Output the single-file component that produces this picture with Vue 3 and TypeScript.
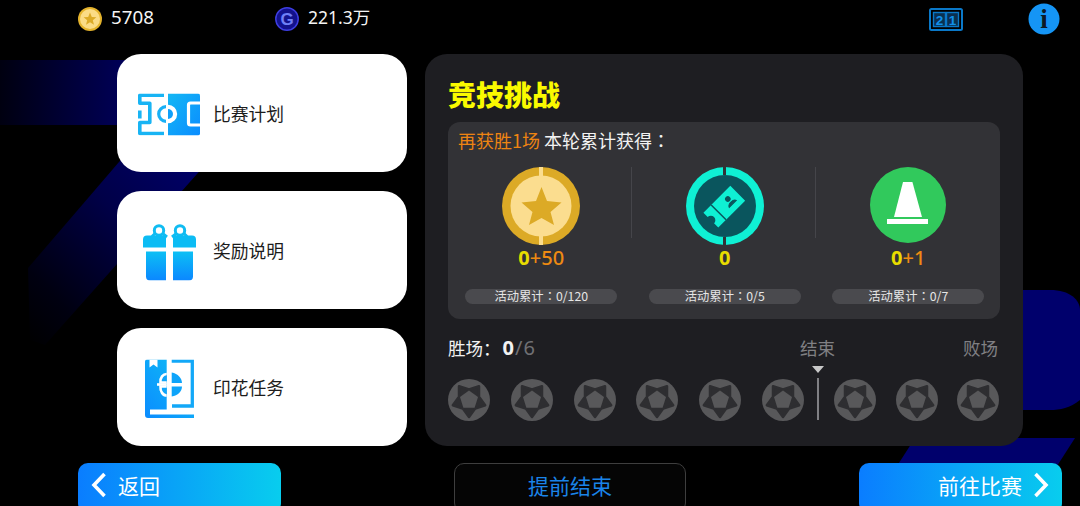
<script setup lang="ts">
const cards = [
  { key: 'plan', label: '比赛计划' },
  { key: 'gift', label: '奖励说明' },
  { key: 'book', label: '印花任务' },
]
const rewards = [
  { key: 'coin', base: '0', extra: '+50', note: '活动累计：0/120' },
  { key: 'ticket', base: '0', extra: '', note: '活动累计：0/5' },
  { key: 'cone', base: '0', extra: '+1', note: '活动累计：0/7' },
]
const winBalls = 6
const lossBalls = 3
</script>

<template>
  <div class="page">
    <svg class="backdrop" width="1080" height="506" viewBox="0 0 1080 506">
      <defs>
        <linearGradient id="bandFade" x1="0" x2="1" y1="0" y2="0">
          <stop offset="0" stop-color="#000010" />
          <stop offset="1" stop-color="#000058" />
        </linearGradient>
        <linearGradient id="diagFade" x1="1" x2="0" y1="0" y2="1">
          <stop offset="0" stop-color="#00006c" />
          <stop offset="0.4" stop-color="#000048" />
          <stop offset="0.8" stop-color="#000010" />
          <stop offset="1" stop-color="#000000" />
        </linearGradient>
      </defs>
      <rect x="0" y="60" width="125" height="65" fill="url(#bandFade)" />
      <path d="M125 155 L205 165 L45 345 L30 340 L28 268 Z" fill="url(#diagFade)" />
      <path d="M1000 290 H1050 C1070 290 1080 300 1080 310 V400 C1070 408 1060 410 1050 410 H1000 Z" fill="#00006c" />
      <path d="M915 438 H1075 L1057 466 H897 Z" fill="#00006c" />
    </svg>

    <header class="topbar">
      <div class="stat stat-coin">
        <svg width="24" height="24" viewBox="0 0 24 24">
          <circle cx="12" cy="12" r="12" fill="#e4b32c" />
          <circle cx="12" cy="12" r="10" fill="#fbdc85" />
          <path d="M12 5.6l1.8 4.4 4.6.3-3.6 2.9 1.2 4.6-4-2.5-4 2.5 1.2-4.6-3.6-2.9 4.6-.3z" fill="#dcab27" />
        </svg>
        <span>5708</span>
      </div>
      <div class="stat stat-gold">
        <svg width="24" height="24" viewBox="0 0 24 24">
          <circle cx="12" cy="12" r="11.2" fill="#12128c" stroke="#3d3de0" stroke-width="1.5" />
          <text x="12" y="17.800" text-anchor="middle" class="g-letter">G</text>
        </svg>
        <span>221.3万</span>
      </div>
      <div class="top-icons">
        <svg width="34" height="24" viewBox="0 0 34 24">
          <rect x="1" y="1" width="32" height="21" rx="1.5" fill="none" stroke="#0a78c8" stroke-width="2" />
          <rect x="4.500" y="4.500" width="12" height="14" fill="#0a3050" stroke="#0a78c8" stroke-width="1.400" />
          <rect x="17.500" y="4.500" width="12" height="14" fill="#0a3050" stroke="#0a78c8" stroke-width="1.400" />
          <text x="10.500" y="16.800" text-anchor="middle" class="score-digit">2</text>
          <text x="23.500" y="16.800" text-anchor="middle" class="score-digit">1</text>
        </svg>
        <svg class="info" width="32" height="32" viewBox="0 0 32 32">
          <circle cx="16" cy="16" r="15.500" fill="#1595f5" />
          <text x="16" y="25" text-anchor="middle" class="info-letter">i</text>
        </svg>
      </div>
    </header>

    <main class="main">
      <nav class="cards">
        <div v-for="card in cards" :key="card.key" class="card">
          <div class="card-icon">
            <svg v-if="card.key === 'plan'" width="62" height="42" viewBox="0 0 62 42">
              <defs>
                <linearGradient id="planFill" x1="0" x2="1" y1="0" y2="1">
                  <stop offset="0" stop-color="#14b8f4" />
                  <stop offset="1" stop-color="#0a8cff" />
                </linearGradient>
              </defs>
              <path d="M26 1.800H1.800V9.800H11.800V29H1.800V40H26" fill="none" stroke="#18b4f4" stroke-width="3.600" stroke-linejoin="round" />
              <rect x="0" y="17" width="3.600" height="8" fill="#18b4f4" />
              <path d="M28 13.200A7.300 7.300 0 0 0 28 27.800" fill="none" stroke="#18b0f6" stroke-width="3.200" />
              <path d="M30 0H60A2 2 0 0 1 62 2V40A2 2 0 0 1 60 42H30Z" fill="url(#planFill)" />
              <path d="M30 11.300A9.200 9.200 0 0 1 30 29.700Z" fill="#fff" />
              <path d="M30 15.500A5 5 0 0 1 30 25.500Z" fill="#0fa0fa" />
              <path d="M62 9.500H52.500A2 2 0 0 0 50.500 11.500V29.500A2 2 0 0 0 52.500 31.500H62" fill="none" stroke="#fff" stroke-width="3.200" />
            </svg>
            <svg v-else-if="card.key === 'gift'" width="53" height="57" viewBox="0 0 53 57">
              <defs>
                <linearGradient id="giftFill" x1="0" x2="0" y1="0" y2="1">
                  <stop offset="0" stop-color="#0cc0f4" />
                  <stop offset="1" stop-color="#0b87ff" />
                </linearGradient>
              </defs>
              <g fill="none" stroke="#10bcf2" stroke-width="3">
                <circle cx="16" cy="7" r="4.700" />
                <circle cx="37" cy="7" r="4.700" />
                <path d="M19.500 10 L24 13.500M33.500 10 L29 13.500M12 10 L9 13M41 10 L44 13" />
              </g>
              <path d="M4 12H23V24H0V16A4 4 0 0 1 4 12ZM30 12H49A4 4 0 0 1 53 16V24H30Z" fill="#0cbcf4" />
              <path d="M3 28H23V57H7A4 4 0 0 1 3 53ZM30 28H50V53A4 4 0 0 1 46 57H30Z" fill="url(#giftFill)" />
            </svg>
            <svg v-else width="49" height="59" viewBox="0 0 49 59">
              <defs>
                <linearGradient id="bookFill" x1="1" x2="0" y1="0" y2="1">
                  <stop offset="0" stop-color="#0fc0f4" />
                  <stop offset="1" stop-color="#0b8cff" />
                </linearGradient>
              </defs>
              <path d="M2 0H21.700V50H5V55H49V58.500H3A3 3 0 0 1 0 55.500V2A2 2 0 0 1 2 0Z" fill="url(#bookFill)" />
              <path d="M4.500 0V8L8.500 5 12.500 8V0Z" fill="#fff" />
              <path d="M21.700 14.500C18 14.500 15 18 15.500 23H21.700M21.700 27H15.500C15 32 18 36 21.700 36" fill="#0ea4fa" stroke="#fff" stroke-width="2.600" />
              <rect x="12" y="23.700" width="9.700" height="2.600" fill="#fff" />
              <path d="M26.700 1.700H47.300V46.500H27" fill="none" stroke="#12a8f8" stroke-width="3.300" />
              <path d="M26.700 13C33 14 37 19 37 23.500H26.700ZM26.700 27H37C37 32 33 36 26.700 37Z" fill="#0ea4fa" />
            </svg>
          </div>
          <span class="card-label">{{ card.label }}</span>
        </div>
      </nav>

      <section class="panel">
        <h1 class="title">竞技挑战</h1>
        <div class="rewards">
          <div class="rewards-head"><em>再获胜1场</em> 本轮累计获得<span class="tc">：</span></div>
          <div class="reward-row">
            <div v-for="reward in rewards" :key="reward.key" class="reward">
              <svg v-if="reward.key === 'coin'" width="78" height="78" viewBox="0 0 78 78">
                <circle cx="39" cy="39" r="39" fill="#dcaa26" />
                <circle cx="39" cy="39" r="30.500" fill="#fbdd8f" />
                <rect x="37" y="0" width="4" height="9" fill="#fbdd8f" />
                <rect x="37" y="69" width="4" height="9" fill="#fbdd8f" />
                <path d="M39.500 20 L45 34 L59.500 35.500 L48.500 45 L52 58 L39.500 51 L27 58 L30.500 45 L19.500 35.500 L34 34 Z" fill="#dcaa26" />
              </svg>
              <svg v-else-if="reward.key === 'ticket'" width="78" height="78" viewBox="0 0 78 78">
                <circle cx="39" cy="39" r="39" fill="#0ff0d4" />
                <circle cx="39" cy="39" r="31" fill="#0a555d" />
                <rect x="37" y="0" width="3" height="8" fill="#323236" />
                <rect x="37" y="70" width="3" height="8" fill="#323236" />
                <g transform="rotate(-45 39 39)">
                  <path d="M19 28.500H57V49.500H19V43.500A4.500 4.500 0 0 0 19 34.500Z" fill="#0ff0d4" />
                  <path d="M30 28.500V49.500" stroke="#0a555d" stroke-width="1.500" />
                  <circle cx="46" cy="36" r="2.800" fill="#0a555d" />
                  <path d="M41 43C42 39.500 50 39.500 51 43Z" fill="#0a555d" stroke="#0a555d" stroke-width="1" />
                </g>
              </svg>
              <svg v-else width="78" height="78" viewBox="0 0 78 78">
                <circle cx="39" cy="38" r="38" fill="#31c95c" />
                <path d="M34 15H43.400L53 50H25Z" fill="#fff" />
                <rect x="18" y="52" width="41" height="5" fill="#fff" />
              </svg>
              <div class="reward-value"><b>{{ reward.base }}</b><i v-if="reward.extra">{{ reward.extra }}</i></div>
              <div class="reward-note">{{ reward.note }}</div>
            </div>
          </div>
        </div>

        <div class="progress-labels">
          <div class="wins">胜场：<b>0</b><span>/6</span></div>
          <div class="end">结束</div>
          <div class="loss">败场</div>
        </div>
        <div class="balls">
          <div class="ball-group">
            <svg v-for="n in winBalls" :key="n" width="42" height="42" viewBox="0 0 42 42">
              <use href="#ball" />
            </svg>
          </div>
          <div class="marker">
            <span class="marker-tip"></span>
            <span class="marker-line"></span>
          </div>
          <div class="ball-group ball-group-loss">
            <svg v-for="n in lossBalls" :key="n" width="42" height="42" viewBox="0 0 42 42">
              <use href="#ball" />
            </svg>
          </div>
        </div>
      </section>
    </main>

    <footer class="footer">
      <button class="btn btn-back">
        <svg width="16" height="26" viewBox="0 0 16 26"><path d="M13.500 2 L3 13 L13.500 24" fill="none" stroke="#fff" stroke-width="3.600" /></svg>
        返回
      </button>
      <button class="btn btn-end">提前结束</button>
      <button class="btn btn-go">
        前往比赛
        <svg width="16" height="26" viewBox="0 0 16 26"><path d="M2.500 2 L13 13 L2.500 24" fill="none" stroke="#fff" stroke-width="3.600" /></svg>
      </button>
    </footer>

    <svg class="defs" width="0" height="0">
      <symbol id="ball" viewBox="0 0 42 42">
        <circle cx="21" cy="21" r="21" fill="#58585a" />
        <path d="M21 10.500 L31 7.250 L31 17.760 L37.170 26.250 L27.170 29.500 L21 38 L14.830 29.500 L4.830 26.250 L11 17.760 L11 7.250 Z" fill="#2e2e31" stroke="#2e2e31" stroke-width="2.500" stroke-linejoin="round" />
        <path d="M21 11.500 L30 18.060 L26.600 28.700 H15.400 L12 18.060 Z" fill="#58585a" />
      </symbol>
    </svg>
  </div>
</template>

<style scoped>
.page {
  position: relative;
  width: 1080px;
  height: 506px;
  overflow: hidden;
  background: #000;
  color: #fff;
  font-family: "Noto Sans CJK SC", "Noto Sans", sans-serif;
  display: flex;
  flex-direction: column;
}
.backdrop {
  position: absolute;
  inset: 0;
}
.defs {
  position: absolute;
}
.topbar,
.main,
.footer {
  position: relative;
}
.topbar {
  height: 54px;
  padding: 3px 20px 0 78px;
  box-sizing: border-box;
  display: flex;
  align-items: flex-start;
}
.stat {
  display: flex;
  align-items: center;
  gap: 9px;
  height: 32px;
  font-family: "Noto Sans", "Noto Sans CJK SC", sans-serif;
  font-size: 17.500px;
  color: #f4f4f4;
}
.stat span {
  margin-bottom: 5px;
}
.stat-coin {
  width: 197px;
  font-size: 18.800px;
}
.g-letter {
  font-family: "Liberation Sans", sans-serif;
  font-weight: 700;
  font-size: 17px;
  fill: #6f80f6;
}
.top-icons {
  margin-left: auto;
  display: flex;
  align-items: flex-start;
  gap: 65px;
}
.top-icons > svg:first-child {
  margin-top: 5px;
}
.score-digit {
  font-family: "Liberation Sans", sans-serif;
  font-weight: 700;
  font-size: 13.500px;
  fill: #1190ea;
}
.info-letter {
  font-family: "Liberation Serif", serif;
  font-weight: 700;
  font-size: 27px;
  fill: #0d1a26;
}
.main {
  height: 392px;
  padding-left: 117px;
  display: flex;
  gap: 18px;
}
.cards {
  width: 290px;
  display: flex;
  flex-direction: column;
  gap: 19px;
}
.card {
  height: 118px;
  background: #fff;
  border-radius: 24px;
  display: flex;
  align-items: center;
  padding-left: 20px;
  box-sizing: border-box;
}
.card-icon {
  width: 76px;
  display: flex;
  justify-content: center;
  transform: translate(-6px, 1.500px);
}
.card-label {
  font-size: 17.800px;
  color: #1c1c1c;
}
.panel {
  width: 598px;
  background: #1e1e22;
  border-radius: 22px;
  padding: 22px 23px 0 23px;
  box-sizing: border-box;
}
.title {
  margin: 0;
  height: 46px;
  font-size: 28px;
  line-height: 36px;
  font-weight: 900;
  color: #fafa00;
}
.rewards {
  height: 197px;
  background: #323236;
  border-radius: 12px;
  padding-top: 5px;
  box-sizing: border-box;
}
.rewards-head {
  font-size: 18px;
  line-height: 26px;
  padding-left: 10px;
  color: #f2f2f2;
}
.rewards-head em {
  font-style: normal;
  color: #ee8412;
}
.tc {
  font-family: "Noto Sans CJK TC", sans-serif;
}
.reward-row {
  display: flex;
  margin-top: 14px;
  margin-left: 1.500px;
}
.reward {
  position: relative;
  width: 183.500px;
  display: flex;
  flex-direction: column;
  align-items: center;
}
.reward:not(:last-child)::after {
  content: "";
  position: absolute;
  right: 1px;
  top: 0;
  width: 1px;
  height: 71px;
  background: #45454a;
}
.reward-value {
  font-family: "Noto Sans", sans-serif;
  font-size: 20px;
  line-height: 24px;
  margin-top: 1px;
  font-weight: 500;
}
.reward-value b {
  font-weight: 700;
  color: #e8dc00;
}
.reward-value i {
  font-style: normal;
  color: #ee8a12;
}
.reward-note {
  width: 152px;
  height: 15px;
  margin-top: 19px;
  border-radius: 8px;
  background: #4a4a4e;
  color: #e6e6e6;
  font-family: "Noto Sans CJK TC", sans-serif;
  font-size: 12.300px;
  line-height: 15px;
  text-align: center;
}
.progress-labels {
  position: relative;
  display: flex;
  justify-content: space-between;
  margin-top: 16px;
  height: 26px;
  line-height: 26px;
  font-size: 17.500px;
  color: #808084;
}
.wins {
  color: #f2f2f2;
}
.wins b {
  font-family: "Noto Sans", sans-serif;
  font-weight: 700;
  font-size: 20px;
  margin-left: 2px;
  margin-right: 1px;
}
.wins span {
  font-family: "Noto Sans", sans-serif;
  font-size: 20px;
  letter-spacing: 1px;
  color: #707074;
}
.end {
  position: absolute;
  left: 352px;
}
.loss {
  margin-right: 2px;
}
.balls {
  display: flex;
  align-items: flex-start;
  margin-top: 5px;
}
.ball-group {
  width: 364.500px;
  margin-top: 13px;
  display: flex;
  gap: 20.800px;
}
.ball-group-loss {
  width: auto;
  margin-left: 10.500px;
  gap: 19.500px;
}
.marker {
  width: 11px;
  display: flex;
  flex-direction: column;
  align-items: center;
}
.marker-tip {
  width: 0;
  height: 0;
  border-left: 6px solid transparent;
  border-right: 6px solid transparent;
  border-top: 7px solid #c8c8c8;
}
.marker-line {
  width: 1.500px;
  height: 42px;
  margin-top: 5px;
  background: #808084;
}
.footer {
  height: 60px;
  padding-top: 17px;
  box-sizing: border-box;
}
.btn {
  position: absolute;
  top: 17px;
  height: 50px;
  box-sizing: border-box;
  border-radius: 10px;
  border: 0;
  display: flex;
  align-items: flex-start;
  padding-top: 7px;
  font-family: "Noto Sans CJK SC", sans-serif;
  font-size: 21px;
  line-height: 30px;
  color: #fff;
}
.btn-back,
.btn-go {
  width: 203px;
  background: linear-gradient(90deg, #0a7dff, #08cdee);
}
.btn-back {
  left: 78px;
  padding-left: 13px;
  gap: 11px;
}
.btn-go {
  left: 859px;
  justify-content: flex-end;
  padding-right: 13px;
  gap: 11px;
}
.btn svg {
  margin-top: 2px;
}
.btn-end {
  left: 454px;
  width: 232px;
  justify-content: center;
  background: #050505;
  border: 1.500px solid #3e3e3e;
  color: #1a84e8;
  padding-top: 6px;
}
</style>
